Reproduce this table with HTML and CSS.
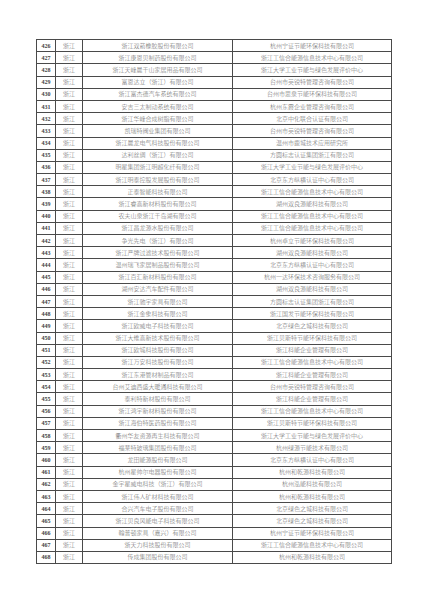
FILE: index.html
```html
<!DOCTYPE html>
<html lang="zh">
<head>
<meta charset="utf-8">
<link rel="stylesheet" href="styles.css">
</head>
<body>
<div class="page">
<table class="list">
<colgroup><col class="c-no"><col class="c-prov"><col class="c-co"><col class="c-ev"></colgroup>
<tbody>
<tr><td class="no">426</td><td>浙江</td><td>浙江双箭橡胶股份有限公司</td><td class="ev">杭州宁证节能环保科技有限公司</td></tr>
<tr><td class="no">427</td><td>浙江</td><td>浙江康恩贝制药股份有限公司</td><td class="ev">浙江工信合能源信息技术中心有限公司</td></tr>
<tr><td class="no">428</td><td>浙江</td><td>浙江天峰晨千山家居用品有限公司</td><td class="ev">浙江大学工业节能与绿色发展评价中心</td></tr>
<tr><td class="no">429</td><td>浙江</td><td>富恩达立（浙江）有限公司</td><td class="ev">台州市英锐特管理咨询有限公司</td></tr>
<tr><td class="no">430</td><td>浙江</td><td>浙江富杰德汽车系统有限公司</td><td class="ev">台州市思泉节能环保科技有限公司</td></tr>
<tr><td class="no">431</td><td>浙江</td><td>安吉三太制动系统有限公司</td><td class="ev">杭州东霞企业管理咨询有限公司</td></tr>
<tr><td class="no">432</td><td>浙江</td><td>浙江华峰合成树脂有限公司</td><td class="ev">北京中化联合认证有限公司</td></tr>
<tr><td class="no">433</td><td>浙江</td><td>凯瑞特阀业集团有限公司</td><td class="ev">台州市英锐特管理咨询有限公司</td></tr>
<tr><td class="no">434</td><td>浙江</td><td>浙江晨龙电气科技股份有限公司</td><td class="ev">温州市鹿城技术应用研究所</td></tr>
<tr><td class="no">435</td><td>浙江</td><td>达利丝绸（浙江）有限公司</td><td class="ev">方圆标志认证集团浙江有限公司</td></tr>
<tr><td class="no">436</td><td>浙江</td><td>明星集团浙江明超化纤有限公司</td><td class="ev">浙江大学工业节能与绿色发展评价中心</td></tr>
<tr><td class="no">437</td><td>浙江</td><td>浙江明泰控股发展股份有限公司</td><td class="ev">北京东方纵横认证中心有限公司</td></tr>
<tr><td class="no">438</td><td>浙江</td><td>正泰智能科技有限公司</td><td class="ev">浙江工信合能源信息技术中心有限公司</td></tr>
<tr><td class="no">439</td><td>浙江</td><td>浙江睿高新材料股份有限公司</td><td class="ev">湖州双良源能科技有限公司</td></tr>
<tr><td class="no">440</td><td>浙江</td><td>农夫山泉浙江千岛湖有限公司</td><td class="ev">浙江工信合能源信息技术中心有限公司</td></tr>
<tr><td class="no">441</td><td>浙江</td><td>浙江昌龙源水股份有限公司</td><td class="ev">浙江工信合能源信息技术中心有限公司</td></tr>
<tr><td class="no">442</td><td>浙江</td><td>争光先电（浙江）有限公司</td><td class="ev">杭州卓立节能环保科技有限公司</td></tr>
<tr><td class="no">443</td><td>浙江</td><td>浙江严牌过滤技术股份有限公司</td><td class="ev">湖州双良源能科技有限公司</td></tr>
<tr><td class="no">444</td><td>浙江</td><td>温州瑞飞家居制品股份有限公司</td><td class="ev">北京东方纵横认证中心有限公司</td></tr>
<tr><td class="no">445</td><td>浙江</td><td>浙江百汇新材料股份有限公司</td><td class="ev">杭州一达环保技术咨询服务有限公司</td></tr>
<tr><td class="no">446</td><td>浙江</td><td>湖州安达汽车配件有限公司</td><td class="ev">湖州双良源能科技有限公司</td></tr>
<tr><td class="no">447</td><td>浙江</td><td>浙江驰宇家具有限公司</td><td class="ev">方圆标志认证集团浙江有限公司</td></tr>
<tr><td class="no">448</td><td>浙江</td><td>浙江金象科技有限公司</td><td class="ev">浙江国发节能环保科技有限公司</td></tr>
<tr><td class="no">449</td><td>浙江</td><td>浙江欧威电子科技有限公司</td><td class="ev">北京绿色之城科技有限公司</td></tr>
<tr><td class="no">450</td><td>浙江</td><td>浙江大维高新技术股份有限公司</td><td class="ev">浙江贝斯特节能环保科技有限公司</td></tr>
<tr><td class="no">451</td><td>浙江</td><td>浙江欧城科技股份有限公司</td><td class="ev">浙江科能企业管理有限公司</td></tr>
<tr><td class="no">452</td><td>浙江</td><td>浙江万安科技股份有限公司</td><td class="ev">浙江工信合能源信息技术中心有限公司</td></tr>
<tr><td class="no">453</td><td>浙江</td><td>浙江东港管材制品有限公司</td><td class="ev">浙江科能企业管理有限公司</td></tr>
<tr><td class="no">454</td><td>浙江</td><td>台州艾迪西盛大暖通科技有限公司</td><td class="ev">台州市英锐特管理咨询有限公司</td></tr>
<tr><td class="no">455</td><td>浙江</td><td>泰利特新材股份有限公司</td><td class="ev">浙江科能企业管理有限公司</td></tr>
<tr><td class="no">456</td><td>浙江</td><td>浙江鸿宇新材料股份有限公司</td><td class="ev">浙江工信合能源信息技术中心有限公司</td></tr>
<tr><td class="no">457</td><td>浙江</td><td>浙江海伯特医药股份有限公司</td><td class="ev">浙江贝斯特节能环保科技有限公司</td></tr>
<tr><td class="no">458</td><td>浙江</td><td>衢州华友资源再生科技有限公司</td><td class="ev">浙江大学工业节能与绿色发展评价中心</td></tr>
<tr><td class="no">459</td><td>浙江</td><td>福莱特玻璃集团股份有限公司</td><td class="ev">杭州绿源节能技术有限公司</td></tr>
<tr><td class="no">460</td><td>浙江</td><td>龙田能源股份有限公司</td><td class="ev">北京东方纵横认证中心有限公司</td></tr>
<tr><td class="no">461</td><td>浙江</td><td>杭州星帅尔电器股份有限公司</td><td class="ev">杭州和乾源科技有限公司</td></tr>
<tr><td class="no">462</td><td>浙江</td><td>金宇星威电科技（浙江）有限公司</td><td class="ev">杭州泓能科技有限公司</td></tr>
<tr><td class="no">463</td><td>浙江</td><td>浙江伟人矿材科技有限公司</td><td class="ev">杭州和乾源科技有限公司</td></tr>
<tr><td class="no">464</td><td>浙江</td><td>合兴汽车电子股份有限公司</td><td class="ev">北京绿色之城科技有限公司</td></tr>
<tr><td class="no">465</td><td>浙江</td><td>浙江贝良风能电子科技有限公司</td><td class="ev">北京绿色之城科技有限公司</td></tr>
<tr><td class="no">466</td><td>浙江</td><td>翰普顿家具（嘉兴）有限公司</td><td class="ev">杭州宁证节能环保科技有限公司</td></tr>
<tr><td class="no">467</td><td>浙江</td><td>浙天力科技股份有限公司</td><td class="ev">浙江工信合能源信息技术中心有限公司</td></tr>
<tr><td class="no">468</td><td>浙江</td><td>传成集团股份有限公司</td><td class="ev">杭州和乾源科技有限公司</td></tr>
</tbody>
</table>
</div>
</body>
</html>
```
FILE: styles.css
```css
html, body {
  margin: 0;
  padding: 0;
  background: #ffffff;
}
.page {
  width: 427px;
  height: 604px;
  padding: 39px 0 0 36px;
  box-sizing: border-box;
}
.list {
  border-collapse: collapse;
  table-layout: fixed;
  width: 355px;
  font-family: "Noto Sans CJK SC", "Noto Sans", sans-serif;
  font-size: 6px;
  font-weight: 300;
  color: #666;
}
.c-no { width: 19px; }
.c-prov { width: 27px; }
.c-co { width: 150px; }
.c-ev { width: 159px; }
.list td {
  border: 1px solid #4a4a4a;
  height: 11.2px;
  padding: 0;
  text-align: center;
  vertical-align: middle;
  line-height: 8px;
  white-space: nowrap;
  overflow: hidden;
}
.list td.ev {
  border-left-color: #999;
}
.list td.no {
  font-family: "Liberation Serif", serif;
  font-weight: bold;
  font-size: 6px;
  color: #444;
}
```
